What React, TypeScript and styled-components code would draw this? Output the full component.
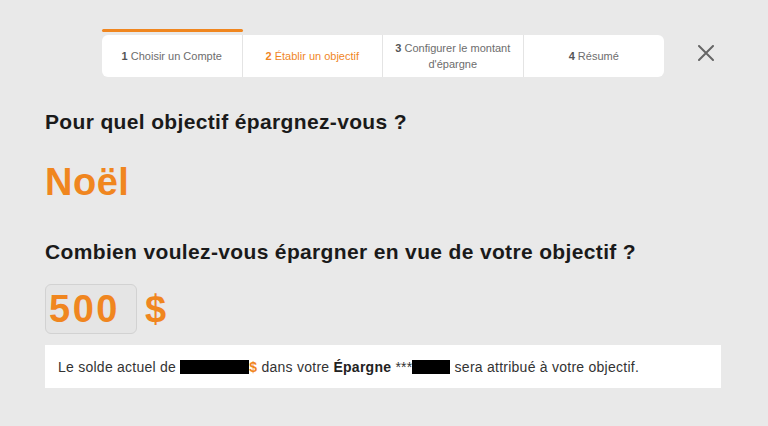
import React from "react";
import styled, { createGlobalStyle } from "styled-components";

const ORANGE = "#f0861f";

const Global = createGlobalStyle`
  html, body { margin: 0; padding: 0; background: #e9e9e9; }
  body { font-family: "Liberation Sans", Arial, sans-serif; }
`;

const Page = styled.div`
  width: 768px;
  height: 426px;
  box-sizing: border-box;
  padding-top: 29px;
  background: #e9e9e9;
  overflow: hidden;
`;

const TopRow = styled.div`
  display: flex;
  align-items: flex-start;
  padding-left: 102px;
`;

const Stepper = styled.div`
  width: 562px;
  display: flex;
  flex-direction: column;
`;

const ProgressTrack = styled.div`
  display: grid;
  grid-template-columns: repeat(4, 1fr);
  height: 3px;
  margin-bottom: 3px;
`;

const ProgressFill = styled.div`
  background: ${ORANGE};
  border-radius: 2px;
`;

const Steps = styled.div`
  display: grid;
  grid-template-columns: repeat(4, 1fr);
  background: #fff;
  border-radius: 6px;
  height: 42px;
  overflow: hidden;
`;

const Step = styled.div<{ $active?: boolean; $last?: boolean }>`
  display: flex;
  align-items: center;
  justify-content: center;
  text-align: center;
  font-size: 11px;
  line-height: 16px;
  color: ${(p) => (p.$active ? ORANGE : "#6d6d6d")};
  border-right: ${(p) => (p.$last ? "none" : "1px solid #e4e4e4")};
  padding: 0 6px;
  b {
    font-weight: 700;
    color: ${(p) => (p.$active ? ORANGE : "#555")};
  }
`;

const Close = styled.button`
  margin-left: 33px;
  margin-top: 15px;
  width: 18px;
  height: 18px;
  padding: 0;
  border: none;
  background: transparent;
  display: flex;
  align-items: center;
  justify-content: center;
`;

const Content = styled.div`
  padding-left: 45px;
  display: flex;
  flex-direction: column;
`;

const Question = styled.h2<{ $top: number }>`
  margin: ${(p) => p.$top}px 0 0;
  font-size: 21px;
  letter-spacing: 0.35px;
  line-height: 24px;
  font-weight: 700;
  color: #1a1a1a;
`;

const Goal = styled.div`
  margin-top: 26px;
  font-size: 38px;
  letter-spacing: 0.5px;
  line-height: 44px;
  font-weight: 700;
  color: ${ORANGE};
`;

const AmountRow = styled.div`
  margin-top: 20px;
  display: flex;
  align-items: center;
  gap: 6px;
`;

const AmountBox = styled.div`
  box-sizing: border-box;
  width: 92px;
  height: 50px;
  border: 1px solid #d2d2d2;
  border-radius: 6px;
  background: #e5e5e5;
  display: flex;
  align-items: center;
  padding-left: 3px;
  font-size: 38px;
  letter-spacing: 2.5px;
  font-weight: 700;
  color: ${ORANGE};
`;

const Currency = styled.span`
  font-size: 38px;
  font-weight: 700;
  color: ${ORANGE};
  margin-left: 2px;
`;

const Info = styled.div`
  margin-top: 11px;
  width: 676px;
  height: 43px;
  box-sizing: border-box;
  background: #fff;
  display: flex;
  align-items: center;
  padding-left: 13px;
  font-size: 14px;
  letter-spacing: 0.25px;
  color: #333;
  white-space: nowrap;
  b { font-weight: 700; color: #222; }
`;

const Redacted = styled.span<{ $w: number }>`
  display: inline-block;
  width: ${(p) => p.$w}px;
  height: 14px;
  background: #000;
`;

const OrangeDollar = styled.span`
  color: ${ORANGE};
  font-weight: 700;
`;

export default function App() {
  return (
    <>
      <Global />
      <Page>
        <TopRow>
          <Stepper>
            <ProgressTrack>
              <ProgressFill />
            </ProgressTrack>
            <Steps>
              <Step>
                <span>
                  <b>1</b> Choisir un Compte
                </span>
              </Step>
              <Step $active>
                <span>
                  <b>2</b> Établir un objectif
                </span>
              </Step>
              <Step>
                <span>
                  <b>3</b> Configurer le montant
                  <br />
                  d'épargne
                </span>
              </Step>
              <Step $last>
                <span>
                  <b>4</b> Résumé
                </span>
              </Step>
            </Steps>
          </Stepper>
          <Close aria-label="Fermer">
            <svg width="16" height="16" viewBox="0 0 16 16">
              <path d="M1 1 L15 15 M15 1 L1 15" stroke="#666" strokeWidth="2" strokeLinecap="round" />
            </svg>
          </Close>
        </TopRow>
        <Content>
          <Question $top={33}>Pour quel objectif épargnez-vous ?</Question>
          <Goal>Noël</Goal>
          <Question $top={36}>Combien voulez-vous épargner en vue de votre objectif ?</Question>
          <AmountRow>
            <AmountBox>500</AmountBox>
            <Currency>$</Currency>
          </AmountRow>
          <Info>
            Le solde actuel de&nbsp;<Redacted $w={69} />
            <OrangeDollar>$</OrangeDollar>&nbsp;dans votre&nbsp;<b>Épargne</b>&nbsp;***
            <Redacted $w={38} />&nbsp;sera attribué à votre objectif.
          </Info>
        </Content>
      </Page>
    </>
  );
}
